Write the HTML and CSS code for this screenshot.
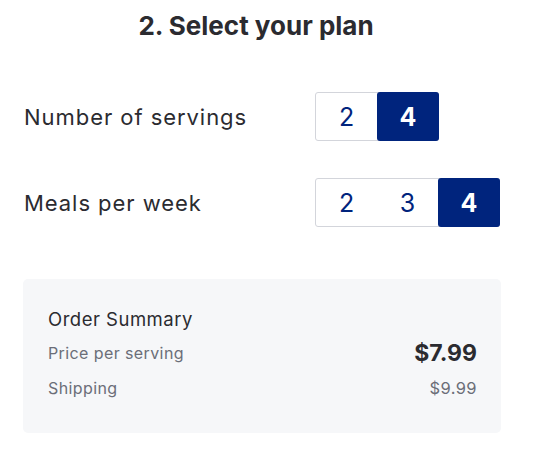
FILE: index.html
```html
<!DOCTYPE html>
<html>
<head>
<meta charset="utf-8">
<link rel="stylesheet" href="styles.css">
</head>
<body>
<main class="page">
  <h1 class="title">2. Select your plan</h1>
  <div class="options">
    <div class="option-label">Number of servings</div>
    <div class="toggle">
      <span class="tbtn">2</span>
      <span class="tbtn active">4</span>
    </div>
    <div class="option-label">Meals per week</div>
    <div class="toggle">
      <span class="tbtn">2</span>
      <span class="tbtn">3</span>
      <span class="tbtn active">4</span>
    </div>
  </div>
  <section class="summary">
    <div class="summary-title">Order Summary</div>
    <div class="summary-rows">
      <div class="summary-row">
        <span class="summary-label">Price per serving</span>
        <span class="price">$7.99</span>
      </div>
      <div class="summary-row">
        <span class="summary-label">Shipping</span>
        <span class="shipping">$9.99</span>
      </div>
    </div>
  </section>
</main>
</body>
</html>
```
FILE: styles.css
```css
* { box-sizing: border-box; }
body {
  margin: 0;
  background: #fff;
  font-family: "Inter", "Open Sans", sans-serif;
  color: #2b2b30;
}
.page {
  width: 524px;
  padding: 0 23px;
}
.title {
  margin: 0;
  padding: 10px 12px 0 0;
  text-align: center;
  font-size: 26px;
  font-weight: 700;
  line-height: 32px;
  color: #2b2b30;
}
.options {
  display: grid;
  grid-template-columns: 291px auto;
  row-gap: 37px;
  align-items: center;
  margin-top: 50px;
  padding-left: 1px;
}
.option-label {
  font-size: 22px;
  letter-spacing: 0.95px;
  color: #2b2b30;
}
.toggle {
  display: flex;
  justify-self: start;
  border: 1px solid #d3d5db;
  border-radius: 3px;
  height: 49px;
}
.tbtn {
  width: 61px;
  display: flex;
  align-items: center;
  justify-content: center;
  font-size: 25px;
  color: #00247d;
}
.tbtn.active {
  background: #00247d;
  color: #fff;
  font-weight: 700;
  border-radius: 3px;
  margin: -1px -1px -1px 0;
  height: 49px;
  width: 62px;
}
.summary {
  margin-top: 52px;
  background: #f6f7f9;
  border-radius: 5px;
  padding: 28px 24px 28px 25px;
}
.summary-title {
  font-size: 18.5px;
  letter-spacing: 0.5px;
  line-height: 24px;
  color: #2b2b30;
}
.summary-rows {
  margin-top: 4px;
}
.summary-row {
  display: flex;
  justify-content: space-between;
  align-items: center;
  height: 35px;
}
.summary-label {
  font-size: 16px;
  letter-spacing: 0.4px;
  color: #6b6e78;
}
.price {
  font-size: 23px;
  font-weight: 700;
  color: #2b2b30;
}
.shipping {
  font-size: 16.5px;
  letter-spacing: 0.4px;
  color: #6b6e78;
}
```
